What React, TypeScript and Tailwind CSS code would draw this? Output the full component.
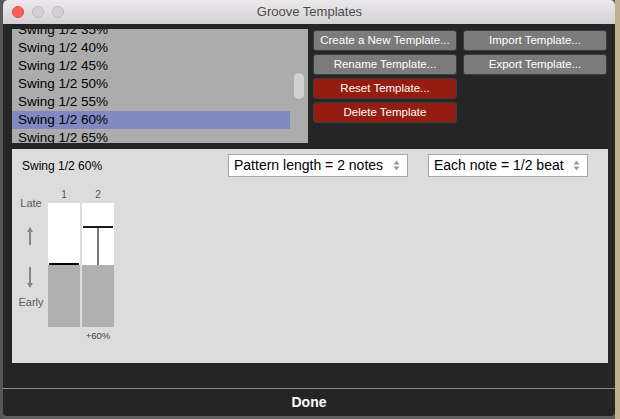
import React from "react";

const items = ["35", "40", "45", "50", "55", "60", "65"];

function Updown() {
  return (
    <svg width="7" height="11" viewBox="0 0 7 11" className="shrink-0">
      <path d="M3.5 0.5 L6.5 4.5 L0.5 4.5 Z" fill="#9a9a9a" />
      <path d="M3.5 10.5 L6.5 6.5 L0.5 6.5 Z" fill="#9a9a9a" />
    </svg>
  );
}

function Btn({ label, red }: { label: string; red?: boolean }) {
  return (
    <div
      className={
        "h-[21px] w-[144px] rounded-[3px] border border-[#3c3c3c] flex items-center justify-center text-white text-[11.5px] " +
        (red ? "bg-[#951c10]" : "bg-[#7b7b7b]")
      }
    >
      {label}
    </div>
  );
}

export default function App() {
  return (
    <div
      className="w-[620px] h-[419px] bg-[#606060] flex overflow-hidden"
      style={{ fontFamily: '"Liberation Sans", Arial, sans-serif' }}
    >
      <div className="w-[3px] shrink-0 bg-[#585858]" />
      <div className="w-[612px] h-[416px] shrink-0 flex flex-col bg-[#252525] rounded-t-[5px] rounded-b-[4px] overflow-hidden">
        {/* title bar */}
        <div className="h-[24px] shrink-0 relative flex items-center bg-gradient-to-b from-[#ebe9eb] to-[#d3d1d3]">
          <div className="flex gap-[8px] pl-[9px]">
            <div className="w-[12px] h-[12px] rounded-full bg-[#fc5f57] border border-[#df4744]" />
            <div className="w-[12px] h-[12px] rounded-full bg-[#d3d1d3] border border-[#bdbbbd]" />
            <div className="w-[12px] h-[12px] rounded-full bg-[#d3d1d3] border border-[#bdbbbd]" />
          </div>
          <div className="absolute inset-0 flex items-center justify-center text-[13px] text-[#4b4b4b] pl-[1px]">
            Groove Templates
          </div>
        </div>

        {/* body */}
        <div className="flex-1 flex flex-col pl-[9px] pr-[7px] pt-[5px]">
          <div className="flex h-[114px] shrink-0">
            {/* list */}
            <div className="w-[296px] h-[114px] bg-[#acacac] relative overflow-hidden">
              <div className="-mt-[8px] flex flex-col">
                {items.map((p) => (
                  <div
                    key={p}
                    className={
                      "h-[18px] w-[278px] flex items-center pl-[6px] text-[13.5px] text-black " +
                      (p === "60" ? "bg-[#8189c0]" : "")
                    }
                  >
                    Swing 1/2 {p}%
                  </div>
                ))}
              </div>
              <div className="absolute left-[282px] top-[44px] w-[10px] h-[26px] rounded-full bg-[#d2d2d2]" />
            </div>
            {/* buttons */}
            <div className="ml-[5px] pt-[1px] flex gap-[6px]">
              <div className="flex flex-col gap-[3px]">
                <Btn label="Create a New Template..." />
                <Btn label="Rename Template..." />
                <Btn label="Reset Template..." red />
                <Btn label="Delete Template" red />
              </div>
              <div className="flex flex-col gap-[3px]">
                <Btn label="Import Template..." />
                <Btn label="Export Template..." />
              </div>
            </div>
          </div>

          {/* lower panel */}
          <div className="mt-[6px] w-[596px] h-[214px] bg-[#dcdcdc] flex flex-col">
            <div className="flex items-start pt-[5px] pl-[10px]">
              <div className="w-[206px] h-[23px] flex items-center text-[12px] text-black">Swing 1/2 60%</div>
              <div className="w-[180px] h-[23px] bg-white border border-[#a6a6a6] flex items-center justify-between pl-[5px] pr-[7px] text-[14px] text-black">
                <span>Pattern length = 2 notes</span>
                <Updown />
              </div>
              <div className="ml-[20px] w-[160px] h-[23px] bg-white border border-[#a6a6a6] flex items-center justify-between pl-[5px] pr-[7px] text-[14px] text-black">
                <span>Each note = 1/2 beat</span>
                <Updown />
              </div>
            </div>

            {/* chart */}
            <div className="mt-[10px] flex pl-[4px]">
              <div className="w-[30px] flex flex-col items-center pt-[10px] text-[11px] text-[#5a5a5a]">
                <div className="h-[12px] leading-[12px]">Late</div>
                <svg width="6" height="18" viewBox="0 0 6 18" className="mt-[18px] mr-[2px]">
                  <path d="M3 0 L6 5 L0 5 Z" fill="#858585" />
                  <rect x="2" y="4" width="2" height="14" fill="#858585" />
                </svg>
                <svg width="6" height="21" viewBox="0 0 6 21" className="mt-[22px] mr-[2px]">
                  <rect x="2" y="0" width="2" height="16" fill="#858585" />
                  <path d="M3 21 L6 16 L0 16 Z" fill="#858585" />
                </svg>
                <div className="mt-[8px] h-[12px] leading-[12px]">Early</div>
              </div>
              <div className="ml-[2px] flex gap-[2px]">
                <div className="w-[32px] flex flex-col">
                  <div className="h-[14px] flex items-center justify-center text-[10px] text-[#555]">1</div>
                  <div className="mt-[2px] h-[124px] flex flex-col">
                    <div className="h-[62px] bg-white flex flex-col justify-end px-[1px]">
                      <div className="h-[2px] bg-black" />
                    </div>
                    <div className="h-[62px] bg-[#b0b0b0]" />
                  </div>
                </div>
                <div className="w-[32px] flex flex-col">
                  <div className="h-[14px] flex items-center justify-center text-[10px] text-[#555]">2</div>
                  <div className="mt-[2px] h-[124px] flex flex-col">
                    <div className="h-[62px] bg-white flex flex-col items-center pt-[23px]">
                      <div className="w-[30px] h-[2px] bg-[#1a1a1a]" />
                      <div className="w-[2px] flex-1 bg-[#7c7c7c]" />
                    </div>
                    <div className="h-[62px] bg-[#b0b0b0]" />
                  </div>
                  <div className="mt-[4px] h-[10px] leading-[10px] text-center text-[9.5px] text-[#444]">+60%</div>
                </div>
              </div>
            </div>
          </div>

          <div className="h-[25px] shrink-0" />
        </div>
        <div className="h-[1px] bg-[#8c8c8c] shrink-0" />
        <div className="h-[27px] shrink-0 flex items-center justify-center text-white text-[14px] font-bold">
          Done
        </div>
      </div>
      <div className="flex-1 bg-[#bfae90]" />
    </div>
  );
}
